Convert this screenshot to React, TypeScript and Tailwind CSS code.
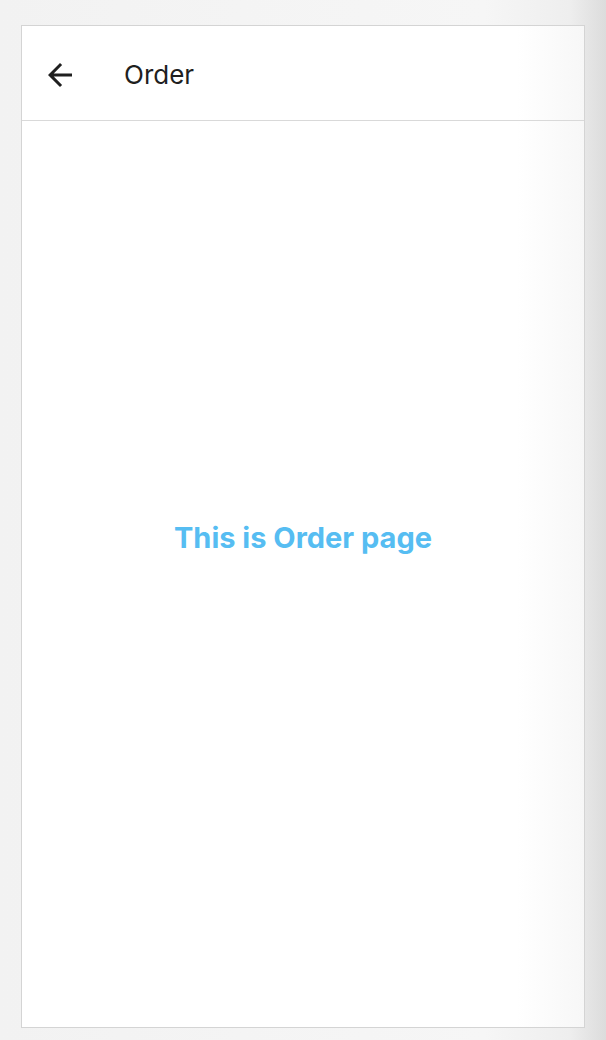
export default function App() {
  return (
    <div
      className="w-[606px] h-[1040px] bg-[#f3f3f3] flex pt-[25px] pl-[21px] pr-[21px] pb-[12px] bg-[linear-gradient(to_right,#f2f2f2_0%,#f6f6f6_80%,#eeeeee_94%,#dcdcdc_100%)]"
      style={{ fontFamily: "Inter, 'Noto Sans', sans-serif" }}
    >
      <div className="flex-1 flex flex-col border border-[#d4d4d4] bg-[linear-gradient(to_right,#ffffff_0%,#ffffff_88%,#f7f7f7_100%)]">
        <header className="h-[95px] shrink-0 flex items-center border-b border-[#d9d9d9] pl-[20px] pt-[4px]">
          <svg width="36" height="36" viewBox="0 0 24 24" className="text-[#1f1f1f]">
            <path fill="currentColor" d="M20 11H7.83l5.59-5.59L12 4l-8 8 8 8 1.41-1.41L7.83 13H20v-2z" />
          </svg>
          <span className="ml-[46px] text-[26px] text-[#1f1f1f] leading-none">Order</span>
        </header>
        <main className="flex-1 flex items-center justify-center pb-[72px]">
          <span className="text-[29px] font-bold text-[#56bdf2]">This is Order page</span>
        </main>
      </div>
    </div>
  );
}
